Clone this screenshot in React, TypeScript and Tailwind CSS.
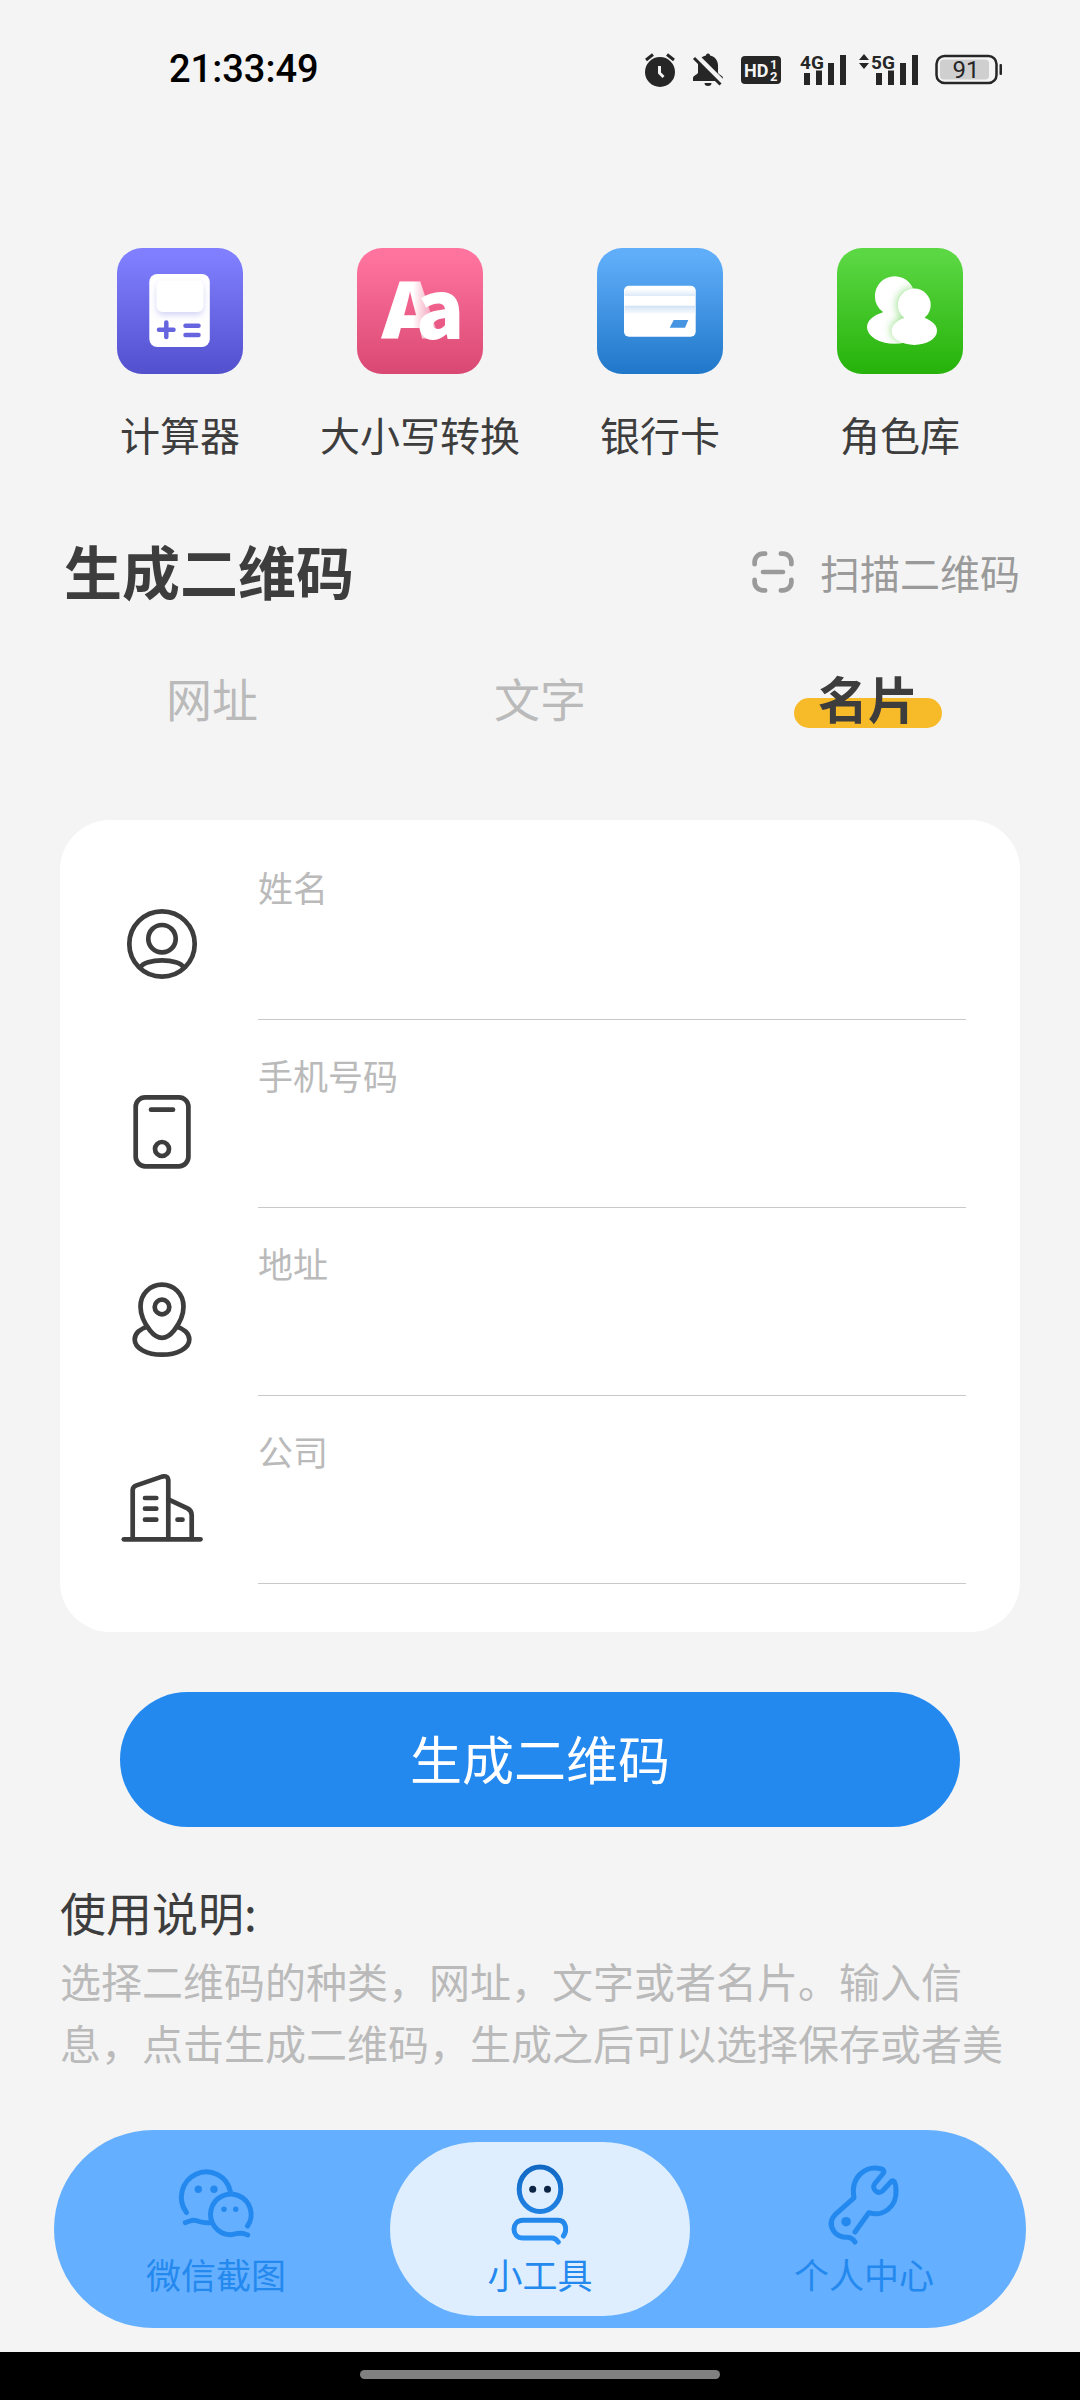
import { useState } from 'react';
import type { ReactNode } from 'react';

const INK = '#3d3d3d';

function StatusBar() {
  return (
    <header className="flex h-[138px] items-center justify-between pr-[77px] pl-[169px]">
      <time className="font-['Roboto'] text-[38px] font-medium text-black">21:33:49</time>
      <div className="flex items-center text-[#262626]">
        <svg className="h-9 w-[32px]" viewBox="0 0 32 36" aria-label="闹钟">
          <circle cx="16" cy="21" r="15" fill="currentColor" />
          <path d="M2 9 L9 3.5 M30 9 L23 3.5" stroke="currentColor" strokeWidth="3" />
          <path d="M15.5 15 V22 L19.5 26" stroke="#f4f4f4" strokeWidth="3" fill="none" />
        </svg>
        <svg className="ml-4 h-9 w-[32px]" viewBox="0 0 32 36" aria-label="静音">
          <path d="M16 2.5 c1.5 0 2 1 2 2 c5 1 8 5 8 10 v7 c0 2 5 3 5 5.500 v3 H1 v-3 c0-2.500 5-3.500 5-5.500 v-7 c0-5 3-9 8-10 c0-1 .5-2 2-2z" fill="currentColor" />
          <path d="M12.500 32 h7 a3.500 3 0 0 1 -7 0z" fill="currentColor" />
          <path d="M3 4 L31 32" stroke="#f4f4f4" strokeWidth="6" />
          <path d="M2 7 L28.500 33.500" stroke="currentColor" strokeWidth="3" />
        </svg>
        <svg className="ml-4 h-9 w-[42px]" viewBox="0 0 42 36" aria-label="HD">
          <rect x="1" y="5" width="40" height="28" rx="4" fill="currentColor" />
          <text x="4" y="25.500" fontSize="18" fontWeight="700" fontFamily="Roboto, sans-serif" fill="#f4f4f4">HD</text>
          <text x="30" y="18" fontSize="13" fontWeight="700" fontFamily="Roboto, sans-serif" fill="#f4f4f4">1</text>
          <text x="30" y="30" fontSize="13" fontWeight="700" fontFamily="Roboto, sans-serif" fill="#f4f4f4">2</text>
        </svg>
        <svg className="ml-[18px] h-9 w-[47px]" viewBox="0 0 47 36" aria-label="4G">
          <text x="0" y="17.500" fontSize="19" fontWeight="700" fontFamily="Roboto, sans-serif" fill="currentColor">4G</text>
          <path d="M7 22 V34 M19 19.500 V34 M31 12 V34 M43 4 V34" stroke="currentColor" strokeWidth="6" />
        </svg>
        <svg className="ml-3 h-9 w-[60px]" viewBox="0 0 60 36" aria-label="5G">
          <path d="M0 9 L5 3 L10 9z M0 12 L5 18 L10 12z" fill="currentColor" />
          <text x="12" y="17.500" fontSize="19" fontWeight="700" fontFamily="Roboto, sans-serif" fill="currentColor">5G</text>
          <path d="M20 22 V34 M32 19.500 V34 M44 12 V34 M56 4 V34" stroke="currentColor" strokeWidth="6" />
        </svg>
        <svg className="ml-4 h-9 w-[68px]" viewBox="0 0 68 36" aria-label="电量 91%">
          <rect x="1.500" y="5" width="60" height="27" rx="8" fill="none" stroke="currentColor" strokeWidth="2.500" />
          <rect x="5" y="8.500" width="49" height="20" rx="4" fill="#cfcfcf" />
          <rect x="64.500" y="13" width="2.500" height="11" rx="1" fill="currentColor" />
          <text x="31" y="27" textAnchor="middle" fontSize="24" fontFamily="Roboto, sans-serif" fill="currentColor">91</text>
        </svg>
      </div>
    </header>
  );
}

function CalculatorIcon() {
  return (
    <svg className="size-[126px]" viewBox="0 0 126 126" aria-hidden="true">
      <defs>
        <linearGradient id="calcBg" x1="0" y1="0" x2="0" y2="1">
          <stop offset="0.05" stopColor="#807fff" />
          <stop offset="1" stopColor="#5250cd" />
        </linearGradient>
        <filter id="calcShadow" x="-30%" y="-30%" width="160%" height="170%">
          <feDropShadow dx="0" dy="3" stdDeviation="3" floodColor="#6b69e0" floodOpacity="0.3" />
        </filter>
      </defs>
      <rect width="126" height="126" rx="25" fill="url(#calcBg)" />
      <rect x="32.300" y="26" width="60.500" height="73" rx="8" fill="#fff" />
      <rect x="39.700" y="32.700" width="46.600" height="31.300" rx="6" fill="#fff" filter="url(#calcShadow)" />
      <path d="M42 81.700 H56.500 M49.300 74.500 V89 M68.500 77.700 H81.500 M68.500 87 H81.500" stroke="#6664de" strokeWidth="4.500" strokeLinecap="round" />
    </svg>
  );
}

function LetterCaseIcon() {
  return (
    <svg className="size-[126px]" viewBox="0 0 126 126" aria-hidden="true">
      <defs>
        <linearGradient id="caseBg" x1="0" y1="0" x2="0" y2="1">
          <stop offset="0.05" stopColor="#ff749f" />
          <stop offset="1" stopColor="#d94873" />
        </linearGradient>
        <linearGradient id="caseFade" gradientUnits="userSpaceOnUse" x1="56" y1="0" x2="72" y2="0">
          <stop offset="0" stopColor="#fff" />
          <stop offset="1" stopColor="#fff" stopOpacity="0.5" />
        </linearGradient>
      </defs>
      <rect width="126" height="126" rx="25" fill="url(#caseBg)" />
      <text y="91" fontSize="80">
        <tspan x="24" fontWeight="800" fontFamily="'Open Sans', sans-serif" fill="url(#caseFade)">A</tspan>
        <tspan x="59" fontWeight="900" fontFamily="'Noto Sans CJK SC', sans-serif" fill="#fff">a</tspan>
      </text>
    </svg>
  );
}

function BankCardIcon() {
  return (
    <svg className="size-[126px]" viewBox="0 0 126 126" aria-hidden="true">
      <defs>
        <linearGradient id="cardBg" x1="0" y1="0" x2="0" y2="1">
          <stop offset="0.05" stopColor="#60aefa" />
          <stop offset="1" stopColor="#2077c9" />
        </linearGradient>
        <linearGradient id="cardUp" x1="0" y1="0" x2="0" y2="1">
          <stop offset="0" stopColor="#fff" />
          <stop offset="1" stopColor="#dbe9f7" />
        </linearGradient>
        <linearGradient id="cardDown" x1="0" y1="0" x2="0" y2="1">
          <stop offset="0" stopColor="#cfe1f4" />
          <stop offset="1" stopColor="#fff" />
        </linearGradient>
      </defs>
      <rect width="126" height="126" rx="25" fill="url(#cardBg)" />
      <rect x="27" y="37.700" width="71.700" height="51" rx="5" fill="#fff" />
      <rect x="27.500" y="41" width="70.700" height="7" fill="url(#cardUp)" />
      <rect x="27.500" y="57.700" width="70.700" height="9" fill="url(#cardDown)" />
      <path d="M76.700 72 H91.300 L88 79.700 H72.700z" fill="#4595e2" />
    </svg>
  );
}

function RolesIcon() {
  return (
    <svg className="size-[126px]" viewBox="0 0 126 126" aria-hidden="true">
      <defs>
        <linearGradient id="roleBg" x1="0" y1="0" x2="0" y2="1">
          <stop offset="0.05" stopColor="#5bd743" />
          <stop offset="1" stopColor="#26b20a" />
        </linearGradient>
        <clipPath id="roleBack">
          <circle cx="57.700" cy="48" r="19.800" />
          <ellipse cx="57.500" cy="79.300" rx="27.500" ry="16.500" />
          <path d="M44 60 Q48 63 44 66 L72 70 V58z" />
        </clipPath>
        <filter id="roleBlur" x="-40%" y="-40%" width="180%" height="180%">
          <feGaussianBlur stdDeviation="4.500" />
        </filter>
      </defs>
      <rect width="126" height="126" rx="25" fill="url(#roleBg)" />
      <g clipPath="url(#roleBack)">
        <rect width="126" height="126" fill="#fff" />
        <g fill="#4cc934" opacity="0.6" filter="url(#roleBlur)">
          <circle cx="77" cy="57" r="17" />
          <ellipse cx="77" cy="82" rx="23" ry="14" />
          <rect x="66" y="66" width="24" height="8" />
        </g>
      </g>
      <g fill="#fff">
        <circle cx="77.300" cy="57" r="16.400" />
        <ellipse cx="77.300" cy="82.700" rx="22.700" ry="14.200" />
        <path d="M66 67 Q69 69 66 72 H89 Q86 69 89 67z" />
      </g>
    </svg>
  );
}

function LineIcon({ children }: { children: ReactNode }) {
  return (
    <svg
      className="size-[84px] shrink-0"
      viewBox="0 0 84 84"
      fill="none"
      stroke={INK}
      strokeWidth="4.700"
      strokeLinecap="round"
      strokeLinejoin="round"
      aria-hidden="true"
    >
      {children}
    </svg>
  );
}

const tools = [
  { name: '计算器', icon: <CalculatorIcon /> },
  { name: '大小写转换', icon: <LetterCaseIcon /> },
  { name: '银行卡', icon: <BankCardIcon /> },
  { name: '角色库', icon: <RolesIcon /> },
];

const fields = [
  {
    id: 'name',
    label: '姓名',
    icon: (
      <LineIcon>
        <circle cx="42" cy="42" r="32.700" />
        <circle cx="42" cy="36.700" r="13.700" />
        <path d="M20.500 65.500 C24 56, 60 56, 63.500 65.500" />
      </LineIcon>
    ),
  },
  {
    id: 'phone',
    label: '手机号码',
    icon: (
      <LineIcon>
        <rect x="15.700" y="7.300" width="52.700" height="69" rx="9.500" />
        <path d="M31 19.700 H53" />
        <circle cx="42" cy="59" r="7" />
      </LineIcon>
    ),
  },
  {
    id: 'address',
    label: '地址',
    icon: (
      <LineIcon>
        <path d="M42 6.700 C54 6.700 63.500 16 63.500 28.500 C63.500 37 59.500 45.500 54 52.500 C50 57.500 46 59.800 42 59.800 C38 59.800 34 57.500 30 52.500 C24.500 45.500 20.500 37 20.500 28.500 C20.500 16 30 6.700 42 6.700z" />
        <circle cx="42" cy="29" r="7.300" />
        <path strokeLinecap="butt" d="M28 48.500 C20 50.500 14.700 55.500 14.700 61.500 C14.700 70.500 27 76.700 42 76.700 S69.300 70.500 69.300 61.500 C69.300 55.500 64 50.500 56 48.500" />
      </LineIcon>
    ),
  },
  {
    id: 'company',
    label: '公司',
    icon: (
      <LineIcon>
        <path d="M3.800 73.300 H80.500" />
        <path d="M12.700 73 V24 Q12.700 20.700 16.500 19.400 L42 10.600 Q48.300 9 48.300 15 V73" />
        <path d="M48.300 33.300 L67.500 42.300 Q71.700 44.500 71.700 49 V73" />
        <path d="M25 32 H36.300 M25 42.700 H36.300 M25 53.700 H36.300 M57.500 53.700 H62.500" />
      </LineIcon>
    ),
  },
];

const navItems = [
  {
    name: '微信截图',
    icon: (
      <svg className="size-[84px]" viewBox="0 0 84 84" fill="none" stroke="#2489ef" strokeWidth="5" strokeLinecap="round" strokeLinejoin="round" aria-hidden="true">
        <path d="M12.500 50.500 A24.800 25.300 0 1 1 56.500 30" />
        <path d="M11.300 60.700 C17 58.500 20 57 25 59.500 C28 60.500 31 61 35.500 60.700" />
        <path d="M73.500 64 A20.300 20.300 0 1 0 56 72.700 C62 72.700 65 69 73.700 73" />
        <g fill="#2489ef" stroke="none">
          <circle cx="24.300" cy="27.300" r="3.700" />
          <circle cx="40" cy="27.300" r="3.700" />
          <circle cx="50" cy="47.300" r="2.700" />
          <circle cx="61.700" cy="47.300" r="2.700" />
        </g>
      </svg>
    ),
  },
  {
    name: '小工具',
    icon: (
      <svg className="size-[84px]" viewBox="0 0 84 84" fill="none" stroke="url(#personStroke)" strokeWidth="5" strokeLinecap="round" strokeLinejoin="round" aria-hidden="true">
        <defs>
          <linearGradient id="personStroke" gradientUnits="userSpaceOnUse" x1="0" y1="3" x2="0" y2="81">
            <stop offset="0" stopColor="#1168c2" />
            <stop offset="1" stopColor="#2a92f8" />
          </linearGradient>
        </defs>
        <ellipse cx="42" cy="27.300" rx="20.800" ry="22.300" />
        <path d="M65.400 74 C69.500 68 68 58.300 60 58.300 H25 C13 58.300 13 76 25 76 H54 C57.500 76 58.500 77.500 60.300 80" />
        <g fill="#0c2545" stroke="none">
          <circle cx="34.700" cy="27.300" r="3.500" />
          <circle cx="49.500" cy="27.300" r="3.500" />
        </g>
      </svg>
    ),
  },
  {
    name: '个人中心',
    icon: (
      <svg className="size-[84px]" viewBox="0 0 84 84" fill="none" stroke="#2489ef" strokeWidth="5" strokeLinecap="round" strokeLinejoin="round" aria-hidden="true">
        <path d="M33 70 L46.800 50.700 C61 55 75 45 74 28 C74 24 73.500 22 72.500 20 C71.500 18.500 70 18.500 69 19.700 L60.500 29 C58.500 30.800 56.500 30.800 54.300 29.500 C51.500 27.500 51 24.500 52.500 22 L61.500 11 C62.500 9 61.500 7.500 59.500 7 C44 2.500 28 15 32 35.800 L14.500 51.300 C8 57.500 8 64 12 69.500 C15 73.500 19 75.300 25 75.300 C29 75.300 31 77 33 80" />
        <circle cx="24.100" cy="59.700" r="4.800" fill="#2489ef" stroke="none" />
      </svg>
    ),
  },
];

const tabs = ['网址', '文字', '名片'];

export default function App() {
  const [tab, setTab] = useState('名片');
  const [page, setPage] = useState('小工具');

  return (
    <div className="flex min-h-screen flex-col bg-[#f4f4f4] font-['Noto_Sans_CJK_SC',sans-serif] text-[#3d3d3d]">
      <StatusBar />

      <main>
        <section className="mx-[60px] mt-[110px] grid grid-cols-4" aria-label="工具">
          {tools.map((tool) => (
            <button key={tool.name} type="button" className="flex flex-col items-center gap-[38px] whitespace-nowrap">
              {tool.icon}
              <span className="text-[40px] leading-[44px]">{tool.name}</span>
            </button>
          ))}
        </section>

        <div className="mx-[60px] mt-20 flex h-[72px] items-center justify-between">
          <h1 className="pb-1 pl-1 text-[58px] leading-[68px] font-bold">生成二维码</h1>
          <button type="button" className="flex items-center gap-[26px] text-[40px] leading-[44px] text-[#9a9a9a]">
            <svg className="size-[42px]" viewBox="0 0 40 40" fill="none" stroke="currentColor" strokeWidth="4.500" strokeLinecap="round" aria-hidden="true">
              <path d="M2.500 12.500 V10.500 A8 8 0 0 1 10.500 2.500 H12.500 M27.500 2.500 H29.500 A8 8 0 0 1 37.500 10.500 V12.500 M37.500 27.500 V29.500 A8 8 0 0 1 29.500 37.500 H27.500 M12.500 37.500 H10.500 A8 8 0 0 1 2.500 29.500 V27.500 M10.500 20 H29.500" />
            </svg>
            扫描二维码
          </button>
        </div>

        <div className="mx-12 mt-16 grid grid-cols-3" role="tablist">
          {tabs.map((name) => (
            <button
              key={name}
              type="button"
              role="tab"
              aria-selected={tab === name}
              onClick={() => setTab(name)}
              className="relative flex h-[60px] items-start justify-center"
            >
              {tab === name && <span className="absolute bottom-1 h-[30px] w-[148px] rounded-full bg-[#f7bb2a]" />}
              <span className={tab === name ? 'relative text-[50px] leading-[50px] font-bold' : 'text-[46px] leading-[50px] text-[#bababa]'}>
                {name}
              </span>
            </button>
          ))}
        </div>

        <form onSubmit={(event) => event.preventDefault()}>
          <div className="mx-[60px] mt-[88px] rounded-[50px] bg-white pt-3 pr-[54px] pb-12 pl-[60px]">
            {fields.map((field) => (
              <div key={field.id} className="flex h-[188px] gap-[54px]">
                <div className="pt-[70px]">{field.icon}</div>
                <div className="flex flex-1 flex-col border-b border-[#c9c9c9] pt-[34px]">
                  <label htmlFor={field.id} className="text-[35px] leading-[42px] text-[#bababa]">
                    {field.label}
                  </label>
                  <input id={field.id} type="text" className="w-full flex-1 bg-transparent text-[40px] outline-none" />
                </div>
              </div>
            ))}
          </div>

          <div className="mx-[120px] mt-[60px]">
            <button type="submit" className="h-[135px] w-full rounded-full bg-[#2489ef] pb-1 text-[52px] leading-[60px] text-white">
              生成二维码
            </button>
          </div>
        </form>

        <section className="mx-[60px] mt-[54px]">
          <h2 className="text-[46px] leading-[60px]">使用说明:</h2>
          <p className="mt-2 text-[41px] leading-[62px] text-[#bababa]">
            选择二维码的种类，网址，文字或者名片。输入信息，点击生成二维码，生成之后可以选择保存或者美
          </p>
        </section>
      </main>

      <nav className="mx-[54px] mt-auto mb-6 grid grid-cols-3 rounded-full bg-[#64afff] py-3">
        {navItems.map((item) => (
          <button
            key={item.name}
            type="button"
            aria-current={page === item.name ? 'page' : undefined}
            onClick={() => setPage(item.name)}
            className={
              page === item.name
                ? 'mx-3 flex h-[174px] flex-col items-center rounded-full bg-[#deeeff] pt-5'
                : 'mx-3 flex h-[174px] flex-col items-center rounded-full pt-5'
            }
          >
            {item.icon}
            <span className="mt-[10px] text-[35px] leading-[36px] text-[#2489ef]">{item.name}</span>
          </button>
        ))}
      </nav>

      <footer className="flex h-12 justify-center bg-black pt-[18px]">
        <div className="h-[9px] w-1/3 rounded-full bg-[#808080]" />
      </footer>
    </div>
  );
}
